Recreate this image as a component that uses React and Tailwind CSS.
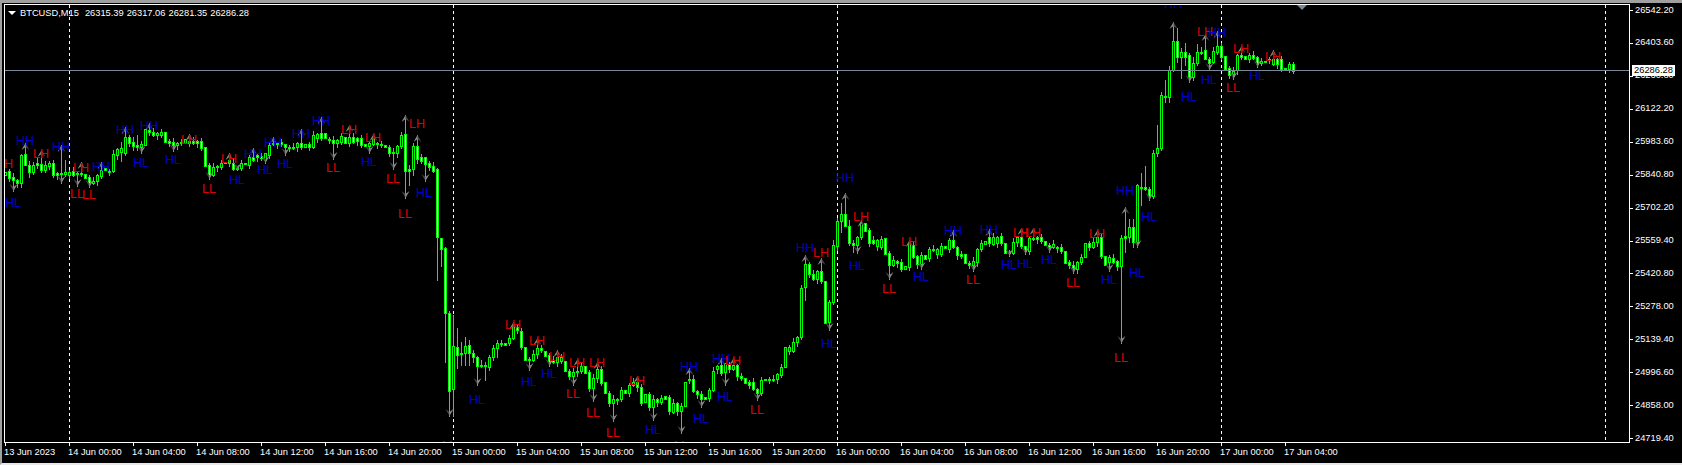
const PRICES = ["26542.20","26403.60","26260.80","26122.20","25983.60","25840.80","25702.20","25559.40","25420.80","25278.00","25139.40","24996.60","24858.00","24719.40"];

const TIMES = ["13 Jun 2023","14 Jun 00:00","14 Jun 04:00","14 Jun 08:00","14 Jun 12:00","14 Jun 16:00","14 Jun 20:00","15 Jun 00:00","15 Jun 04:00","15 Jun 08:00","15 Jun 12:00","15 Jun 16:00","15 Jun 20:00","16 Jun 00:00","16 Jun 04:00","16 Jun 08:00","16 Jun 12:00","16 Jun 16:00","16 Jun 20:00","17 Jun 00:00","17 Jun 04:00"];

const SEPARATORS = [69, 453, 837, 1221, 1605];

// one row per M15 bar, first at x=5, 4px apart: [bodyTop, bodyBottom, white, high, low] in screen y
const BARS = [
  [172,175,0],[171,178,1],[177,180,1],[180,183,1],[155,183,0,154,187],[154,165,1],[165,172,1,161,177],[165,172,0,162,174],[163,165,1,158,168],[164,170,1],
  [165,170,0,161,172],[163,166,0],[163,175,1,160,177],[173,175,1],[173,174,1,145,178],[172,174,0,160,176],[172,175,0],[171,175,1],[173,174,0],[173,174,0],
  [174,178,1],[177,183,1],[181,183,0],[175,181,0],[170,176,0],[168,170,1],[171,172,1],[154,171,0],[149,155,0],[148,152,0,142,161],
  [137,153,0,127,155],[137,143,1],[142,146,1,137,150],[145,147,1,135,150],[144,147,0],[129,145,0],[130,132,1],[132,135,1],[133,135,0],[132,135,0],
  [132,142,1],[141,143,1],[142,145,1],[143,145,0],[142,143,1],[139,143,0],[141,143,1],[141,143,1],[141,143,1],[141,148,1],
  [147,166,1],[165,175,1],[167,175,0],[166,167,1],[163,167,0],[162,163,1],[160,163,1],[163,169,1],[168,169,1],[163,168,0],
  [163,164,0],[157,165,0],[157,160,1],[155,157,1],[156,158,1],[153,160,0],[145,155,0],[143,144,1],[143,144,1],[142,144,1],
  [144,147,1],[147,148,1],[147,148,1],[143,147,0],[143,147,1],[144,147,0],[144,147,1],[135,147,0],[134,138,0],[133,138,1],
  [133,138,1],[139,140,1],[140,143,1],[140,143,0],[136,142,0],[137,143,1],[137,143,0],[137,142,1],[138,141,1],[138,145,1],
  [144,146,1],[143,146,0],[139,144,0],[143,144,1],[144,145,1],[145,147,1],[147,153,1],[152,153,1],[146,153,0],[135,146,0],
  [134,171,1],[169,171,1,165,185],[146,169,0,143,175],[146,159,1],[157,161,1],[157,164,1],[163,167,1],[166,171,1],[169,237,1,168,280],[238,249,1,238,266],
  [248,313,1,247,362],[313,391,1],[346,389,0,315,416],[347,355,1,328,368],[353,354,1,342,365],[346,353,0,337,365],[345,353,1,340,365],[353,357,1,350,362],[357,366,1],[365,366,1,360,367],
  [365,366,1,362,380],[357,367,0],[348,357,0,345,360],[343,348,0,340,357],[343,344,1],[343,345,1],[338,343,0,335,345],[327,338,0],[327,330,1,325,333],[331,347,1],
  [347,360,1],[359,360,1],[354,360,0],[348,354,0],[348,350,1],[351,356,1],[355,362,1],[360,362,1],[357,362,0],[357,361,0],
  [361,371,1],[371,376,1],[372,376,0],[371,372,1],[366,371,0],[366,373,1],[372,388,1],[378,388,0],[369,378,0],[369,383,1],
  [382,393,1],[393,403,1],[399,403,0],[399,400,1],[390,399,0],[390,393,1],[385,393,0],[382,385,0],[382,387,1],[387,403,1],
  [394,402,0],[394,407,1],[399,407,0],[399,402,1],[398,402,0],[396,399,1],[397,411,1],[403,412,0],[403,411,1],[406,411,0],
  [382,406,0],[379,380,1],[379,391,1],[391,394,1],[394,399,1],[397,399,1],[390,398,0],[371,390,0],[366,369,0],[365,373,1],
  [363,372,0],[364,369,1],[365,369,0],[365,376,1],[376,378,1],[378,383,1],[382,385,1],[382,389,1],[389,393,1],[380,393,0],
  [379,380,1],[379,380,1],[379,380,1],[374,379,0],[367,375,0],[347,367,0],[347,351,0],[342,351,0],[337,342,0],[288,337,0],
  [264,287,0,255,300],[264,274,1],[274,279,1],[271,279,0],[271,281,1],[281,323,1],[302,322,0],[245,302,0,240,304],[221,246,0,218,250],[214,221,0,203,232],
  [214,226,1],[226,243,1,220,245],[243,245,1,240,252],[237,245,0],[223,237,0],[223,231,1],[230,243,1],[240,243,1],[240,246,0],[239,247,0],
  [238,254,1],[253,265,1],[260,265,0],[261,263,1],[262,269,1],[266,269,0],[243,267,0],[245,257,1],[256,264,1],[255,264,0],
  [255,259,1],[249,258,0],[249,250,1],[249,254,0],[246,254,0],[246,248,1],[240,249,0],[240,247,1],[247,255,1],[254,256,1],
  [254,263,1],[263,265,1],[261,265,0],[249,262,0],[243,249,0],[241,244,0],[237,243,1],[237,244,0],[237,243,0],[236,243,1],
  [243,253,1],[252,253,1],[242,253,0],[237,242,0],[237,246,1],[246,251,1],[238,251,0],[238,239,1],[237,239,1],[237,241,1],
  [241,245,1],[245,247,1],[244,247,0],[247,248,1],[247,251,1],[251,263,1],[262,265,1],[265,268,1],[262,269,0],[257,262,0],
  [243,257,0],[243,247,1],[242,247,0],[237,242,0],[237,256,1],[256,265,1],[257,262,0],[258,262,1],[261,266,1],[238,266,0],
  [236,238,1,210,252],[227,237,0,219,242],[227,242,1,219,247],[185,242,0],[187,188,1,173,205],[187,189,1,166,190],[189,196,1],[153,196,0,150,198],[148,153,0,125,156],[95,148,0],
  [96,97,1,80,102],[70,97,0,66,102],[41,70,0],[41,57,1,28,62],[52,57,0,48,78],[52,57,1,43,65],[55,77,1],[63,77,0,57,80],[52,63,0,44,65],[52,53,1,47,54],
  [50,59,1],[59,63,1],[51,62,0],[46,52,0,37,54],[46,57,1],[56,69,1],[68,75,1],[71,74,0],[55,70,0],[55,57,1],
  [56,59,1],[55,59,0],[55,58,1],[57,64,1],[61,63,0],[61,62,1],[59,60,1],[59,64,0],[59,64,1],[59,69,1],
  [68,69,1],[64,69,0],[64,71,1,62,73],
];

// swing labels: [text, centre x, centre y, arrow x, arrow y]
const SWINGS = [
  ["LH",5,163],["HH",25,140,25,143],["HL",13,202,13,191],["LH",41,153,41,150],["HH",61,146,61,145],["LH",81,167,81,162],["LL",77,193,77,186],["LL",89,194,89,187],
  ["HH",101,166,101,162],["HH",125,129,125,127],["HL",141,162,141,153],["HH",149,125,149,123],["HL",173,159,173,151],["LH",189,139,189,134],["LL",209,188,209,179],
  ["LH",229,158,229,153],["HL",237,179,237,170],["HH",253,153,253,148],["HL",265,169,265,163],["HH",273,142,273,137],["HL",285,163,285,155],["HH",301,133,301,129],
  ["HH",321,120,321,117],["LL",333,167,333,159],["LH",349,129,349,125],["LH",373,137,373,134],["HL",369,161,369,153],["LL",393,178,393,169],["LL",405,213,405,198],
  ["LH",417,123,405,115],["HL",424,192,425,181],["LL",449,445,449,416],["HL",477,399,477,385],["LH",513,324,513,322],["LH",537,340,537,338],["HL",529,381,529,370],
  ["HL",549,373,549,366],["LH",557,356,557,350],["LH",577,362,577,359],["LL",573,393,573,385],["LH",597,362,597,362],["LL",593,412,593,401],["LL",613,432,613,421],
  ["LH",637,380,637,376],["HL",653,429,653,420],["HH",689,366,689,368],["HL",701,418,701,407],["LL",681,445,681,433],["HH",721,358,721,358],["LH",733,360,733,358],
  ["HL",725,396,725,385],["LL",757,409,757,400],["HH",805,247,805,255],["LH",821,252,821,258],["HL",829,343,829,330],["HL",857,265,857,253],["HH",845,177,845,193],
  ["LH",861,216,861,220],["LL",889,288,889,279],["HL",921,276,921,269],["LH",909,241,909,240],["HH",953,230,953,230],["LL",973,279,973,271],["HH",989,229,989,229],
  ["HL",1009,264,1009,256],["HL",1025,263,1025,254],["LH",1021,232,1021,228],["LH",1033,232,1033,228],["HL",1049,259,1049,252],["LL",1073,282,1073,273],["LH",1097,233,1097,230],
  ["HL",1109,279,1109,271],["LL",1121,357,1121,343],["HH",1125,190,1125,207],["HL",1137,272,1137,247],["HL",1149,216,1149,200],["HH",1173,3,1173,22],["LH",1205,31,1205,34],
  ["HH",1217,32,1217,31],["HL",1189,96,1189,82],["HL",1209,79,1209,70],["LH",1241,48,1241,46],["LL",1233,87,1233,79],["HL",1257,75,1257,67],["LH",1273,56,1273,50],
];

// bars that carry an arrow but whose label sits elsewhere
const EXTRA_ARROWS = [[61,183],[417,135]];

const isUp = (text) => text.endsWith("H");

const arrowLimits = () => {
  const highs = {};
  const lows = {};
  SWINGS.forEach(([text, , , ax, ay]) => {
    if (ax === undefined) return;
    if (isUp(text)) highs[ax] = ay;
    else lows[ax] = ay;
  });
  EXTRA_ARROWS.forEach(([ax, ay]) => {
    if (ax === 417) highs[ax] = ay;
    else lows[ax] = ay;
  });
  return { highs, lows };
};

const Candles = () => {
  const { highs, lows } = arrowLimits();
  return BARS.map(([top, bottom, white, high, low], k) => {
    const x = 5 + k * 4;
    const hi = highs[x] ?? high ?? top - ((k * 7) % 5);
    const lo = lows[x] ?? low ?? bottom + ((k * 13) % 5);
    return (
      <g key={k}>
        <rect x={x} y={hi} width="1" height={lo - hi + 1} fill="#00ff00" />
        <rect x={x - 1} y={top} width="3" height={bottom - top + 1} fill="#00ff00" />
        {bottom - top > 1 && (
          <rect x={x} y={top + 1} width="1" height={bottom - top - 1} fill={white ? "#ffffff" : "#000000"} />
        )}
      </g>
    );
  });
};

const Arrow = ({ x, y, up }) => {
  const cx = x + 0.5;
  if (up) {
    return (
      <g>
        <polygon points={`${cx},${y} ${cx},${y + 4} ${cx - 4},${y + 7}`} fill="#8c8c8c" />
        <polygon points={`${cx},${y} ${cx},${y + 4} ${cx + 4},${y + 7}`} fill="#474747" />
      </g>
    );
  }
  return (
    <g>
      <polygon points={`${cx},${y} ${cx},${y - 4} ${cx - 4},${y - 7}`} fill="#474747" />
      <polygon points={`${cx},${y} ${cx},${y - 4} ${cx + 4},${y - 7}`} fill="#8c8c8c" />
    </g>
  );
};

const Chart = () => (
  <svg viewBox="5 5 1624 437" width="1624" height="437" className="block">
    {SEPARATORS.map((x) => (
      <line key={x} x1={x + 0.5} x2={x + 0.5} y1="5" y2="442" stroke="#ffffff" strokeDasharray="3 3" />
    ))}
    <g shapeRendering="crispEdges">
      <Candles />
    </g>
    {SWINGS.map(([text, , , ax, ay], i) =>
      ax === undefined ? null : <Arrow key={i} x={ax} y={ay} up={isUp(text)} />,
    )}
    {EXTRA_ARROWS.map(([ax, ay]) => (
      <Arrow key={ax} x={ax} y={ay} up={ax === 417} />
    ))}
    <rect x="5" y="70" width="1624" height="1" fill="#778899" shapeRendering="crispEdges" />
    <polygon points="1297,5 1307,5 1302,10" fill="#778899" />
    {SWINGS.map(([text, cx, cy], i) => (
      <text
        key={i}
        x={cx}
        y={cy + 4.5}
        textAnchor="middle"
        fontSize="12.5"
        fill={text[0] === "L" ? "#e00000" : "#0000cd"}
      >
        {text}
      </text>
    ))}
  </svg>
);

export default function App() {
  return (
    <div className="w-[1682px] h-[465px] overflow-hidden bg-black border-t-[3px] border-l-[2px] border-b-[2px] border-t-[#a0a0a0] border-l-[#a0a0a0] border-b-[#e8e8e8] pt-px pl-[2px] text-white text-[9.3px] font-['Liberation_Sans',sans-serif]">
      <div className="flex">
        <div className="w-[1626px] shrink-0">
          <div className="relative h-[439px] border border-white">
            <Chart />
            <div className="absolute left-[3px] top-[2px] flex items-center gap-[3px] leading-[12px] whitespace-nowrap">
              <svg width="8" height="4" viewBox="0 0 8 4" className="mr-px">
                <polygon points="0,0 8,0 4,4" fill="#ffffff" />
              </svg>
              <span className="mr-[3px]">BTCUSD,M15</span>
              <span>26315.39</span>
              <span>26317.06</span>
              <span>26281.35</span>
              <span>26286.28</span>
            </div>
          </div>
          <div className="flex ml-px">
            {TIMES.map((t) => (
              <div key={t} className="w-[64px] shrink-0">
                <div className="w-px h-[3px] bg-white" />
                <div className="-ml-px leading-[12px] whitespace-nowrap">{t}</div>
              </div>
            ))}
          </div>
        </div>
        <div className="relative flex-1">
          <div className="-mt-[10px]">
            {PRICES.map((p) => (
              <div key={p} className="flex items-center h-[32.95px]">
                <div className="w-[3px] h-px bg-white" />
                <span className="ml-[2px]">{p}</span>
              </div>
            ))}
          </div>
          <div className="absolute left-[2px] top-[61px] h-[11px] w-[43px] flex items-center justify-center bg-white text-black">
            26286.28
          </div>
        </div>
      </div>
    </div>
  );
}
